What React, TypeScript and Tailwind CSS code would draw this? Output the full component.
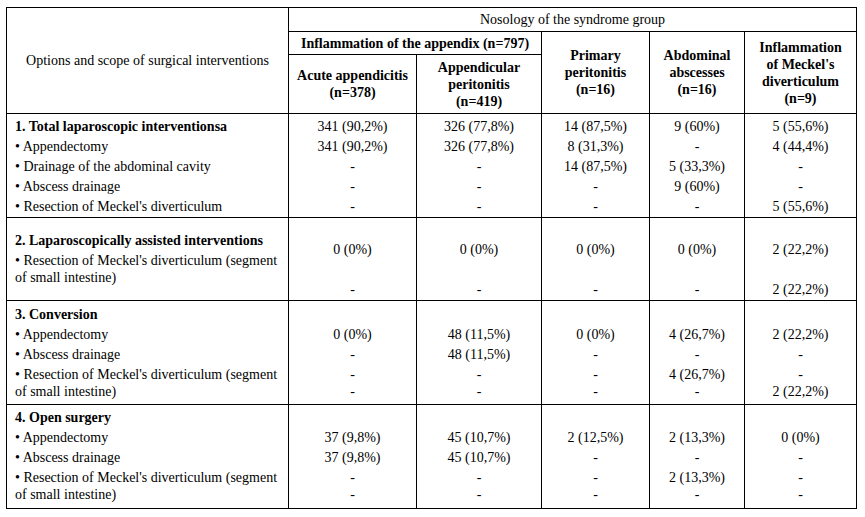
import React from 'react';

type Item = string | string[];

const Line: React.FC<{ item: Item; bold?: boolean }> = ({ item, bold }) => (
    <div className={`min-h-[17px] leading-[17px] whitespace-nowrap ${bold ? 'font-bold' : ''}`}>
        {Array.isArray(item) ? item.map((t, i) => (
            <React.Fragment key={i}>{i > 0 && <br />}{t}</React.Fragment>
        )) : item}
    </div>
);

const resection: Item = ["• Resection of Meckel's diverticulum (segment", 'of small intestine)'];

// body groups: left column items + one list per data column
const groups: { left: Item[]; data: Item[][]; leftPad: string; dataPad: string }[] = [
    {
        left: ['1. Total laparoscopic interventionsa', '• Appendectomy', '• Drainage of the abdominal cavity', '• Abscess drainage', "• Resection of Meckel's diverticulum"],
        data: [
            ['341 (90,2%)', '341 (90,2%)', '-', '-', '-'],
            ['326 (77,8%)', '326 (77,8%)', '-', '-', '-'],
            ['14 (87,5%)', '8 (31,3%)', '14 (87,5%)', '-', '-'],
            ['9 (60%)', '-', '5 (33,3%)', '9 (60%)', '-'],
            ['5 (55,6%)', '4 (44,4%)', '-', '-', '5 (55,6%)'],
        ],
        leftPad: 'pt-[4px]',
        dataPad: 'pt-[4px]',
    },
    {
        left: ['2. Laparoscopically assisted interventions', resection],
        data: [
            ['0 (0%)', '', '-'],
            ['0 (0%)', '', '-'],
            ['0 (0%)', '', '-'],
            ['0 (0%)', '', '-'],
            ['2 (22,2%)', '', '2 (22,2%)'],
        ],
        leftPad: 'justify-center',
        dataPad: 'pt-[23px]',
    },
    {
        left: ['3. Conversion', '• Appendectomy', '• Abscess drainage', resection],
        data: [
            ['', '0 (0%)', '-', ['-', '-']],
            ['', '48 (11,5%)', '48 (11,5%)', ['-', '-']],
            ['', '0 (0%)', '-', ['-', '-']],
            ['', '4 (26,7%)', '-', ['4 (26,7%)', '-']],
            ['', '2 (22,2%)', '-', ['-', '2 (22,2%)']],
        ],
        leftPad: 'pt-[5px]',
        dataPad: 'pt-[5px]',
    },
    {
        left: ['4. Open surgery', '• Appendectomy', '• Abscess drainage', resection],
        data: [
            ['', '37 (9,8%)', '37 (9,8%)', ['-', '-']],
            ['', '45 (10,7%)', '45 (10,7%)', ['-', '-']],
            ['', '2 (12,5%)', '-', ['-', '-']],
            ['', '2 (13,3%)', '-', ['2 (13,3%)', '-']],
            ['', '0 (0%)', '-', ['-', '-']],
        ],
        leftPad: 'pt-[4px]',
        dataPad: 'pt-[4px]',
    },
];

const cell = 'border-r border-b border-black';
const head = `${cell} flex flex-col items-center justify-center text-center font-bold leading-[17px]`;

const App: React.FC = () => {
    return (
        <div className="w-[865px] h-[517px] bg-white pt-[7px] pl-[6px] text-[14px] text-black [font-family:'Liberation_Serif','Times_New_Roman',serif]">
            <div className="grid w-[851px] grid-cols-[282px_128px_125px_108px_95px_112px] grid-rows-[24px_23px_59px_104px_83px_104px_104px] border-l border-t border-black">
                <div className={`${cell} row-span-3 flex items-center justify-center text-center leading-[17px]`}>
                    Options and scope of surgical interventions
                </div>
                <div className={`${cell} col-span-5 flex items-center justify-center leading-[17px]`}>
                    Nosology of the syndrome group
                </div>
                <div className={`${head} col-span-2`}>Inflammation of the appendix (n=797)</div>
                <div className={`${head} row-span-2`}>Primary<br />peritonitis<br />(n=16)</div>
                <div className={`${head} row-span-2`}>Abdominal<br />abscesses<br />(n=16)</div>
                <div className={`${head} row-span-2`}>Inflammation<br />of Meckel's<br />diverticulum<br />(n=9)</div>
                <div className={head}>Acute appendicitis<br />(n=378)</div>
                <div className={head}>Appendicular<br />peritonitis<br />(n=419)</div>

                {groups.map((g, gi) => (
                    <React.Fragment key={gi}>
                        <div className={`${cell} flex flex-col gap-[3px] pl-2 ${g.leftPad}`}>
                            {g.left.map((it, i) => <Line key={i} item={it} bold={i === 0} />)}
                        </div>
                        {g.data.map((col, ci) => (
                            <div key={ci} className={`${cell} flex flex-col items-center gap-[3px] text-center ${g.dataPad}`}>
                                {col.map((it, i) => <Line key={i} item={it} />)}
                            </div>
                        ))}
                    </React.Fragment>
                ))}
            </div>
        </div>
    );
};

export default App;
